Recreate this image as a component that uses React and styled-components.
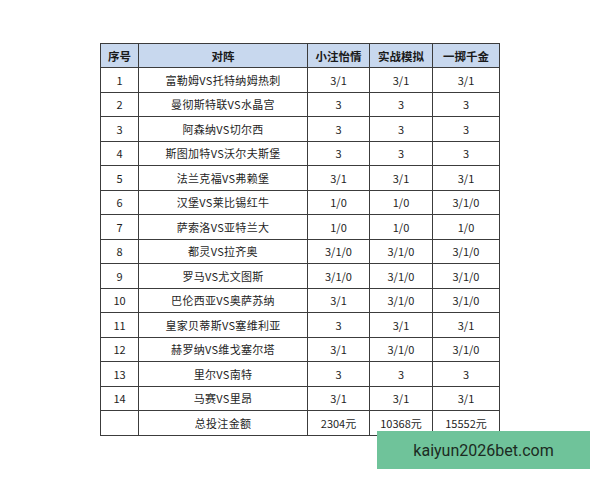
import React from "react";
import styled, { createGlobalStyle } from "styled-components";

const Global = createGlobalStyle`
  html, body { margin: 0; padding: 0; background: #ffffff; }
  body { font-family: "Noto Sans CJK SC", "DejaVu Sans", sans-serif; }
`;

const Page = styled.div`
  position: relative;
  width: 600px;
  height: 480px;
  padding: 43px 0 0 100px;
  box-sizing: border-box;
  overflow: hidden;
`;

const Table = styled.table`
  border-collapse: collapse;
  table-layout: fixed;
  width: 399px;
  color: #222;
  font-size: 11px;
  line-height: 12px;
`;

const Col = styled.col`
  width: ${(p) => p.$w}px;
`;

const Head = styled.th`
  height: 23px;
  padding: 0;
  background: #c8d8ee;
  border: 1.5px solid #3c3c3c;
  font-weight: 700;
  font-size: 11.5px;
  line-height: 12px;
  text-align: center;
  color: #1a1a1a;
`;

const Cell = styled.td`
  height: 23.5px;
  padding: 0;
  border: 1.5px solid #3c3c3c;
  text-align: center;
  white-space: nowrap;
  font-size: 11px;
  line-height: 12px;
  color: #1e1e1e;
  letter-spacing: ${(p) => (p.$wide ? "0.3px" : "0")};
`;

const Watermark = styled.div`
  position: absolute;
  left: 377px;
  top: 431px;
  width: 213px;
  height: 38px;
  background: #6fc39a;
  display: flex;
  align-items: center;
  justify-content: center;
  font-family: Roboto, "Liberation Sans", sans-serif;
  font-size: 16px;
  color: #1c2b22;
`;

const rows = [
  ["1", "富勒姆VS托特纳姆热刺", "3/1", "3/1", "3/1"],
  ["2", "曼彻斯特联VS水晶宫", "3", "3", "3"],
  ["3", "阿森纳VS切尔西", "3", "3", "3"],
  ["4", "斯图加特VS沃尔夫斯堡", "3", "3", "3"],
  ["5", "法兰克福VS弗赖堡", "3/1", "3/1", "3/1"],
  ["6", "汉堡VS莱比锡红牛", "1/0", "1/0", "3/1/0"],
  ["7", "萨索洛VS亚特兰大", "1/0", "1/0", "1/0"],
  ["8", "都灵VS拉齐奥", "3/1/0", "3/1/0", "3/1/0"],
  ["9", "罗马VS尤文图斯", "3/1/0", "3/1/0", "3/1/0"],
  ["10", "巴伦西亚VS奥萨苏纳", "3/1", "3/1/0", "3/1/0"],
  ["11", "皇家贝蒂斯VS塞维利亚", "3", "3/1", "3/1"],
  ["12", "赫罗纳VS维戈塞尔塔", "3/1", "3/1/0", "3/1/0"],
  ["13", "里尔VS南特", "3", "3", "3"],
  ["14", "马赛VS里昂", "3/1", "3/1", "3/1"],
  ["", "总投注金额", "2304元", "10368元", "15552元"],
];

export default function App() {
  return (
    <>
      <Global />
      <Page>
        <Table>
          <colgroup>
            <Col $w={38} />
            <Col $w={169} />
            <Col $w={62} />
            <Col $w={63} />
            <Col $w={67} />
          </colgroup>
          <thead>
            <tr>
              <Head>序号</Head>
              <Head>对阵</Head>
              <Head>小注怡情</Head>
              <Head>实战模拟</Head>
              <Head>一掷千金</Head>
            </tr>
          </thead>
          <tbody>
            {rows.map((r, i) => (
              <tr key={i}>
                {r.map((c, j) => (
                  <Cell key={j} $wide={j === 1}>
                    {c}
                  </Cell>
                ))}
              </tr>
            ))}
          </tbody>
        </Table>
        <Watermark>kaiyun2026bet.com</Watermark>
      </Page>
    </>
  );
}
